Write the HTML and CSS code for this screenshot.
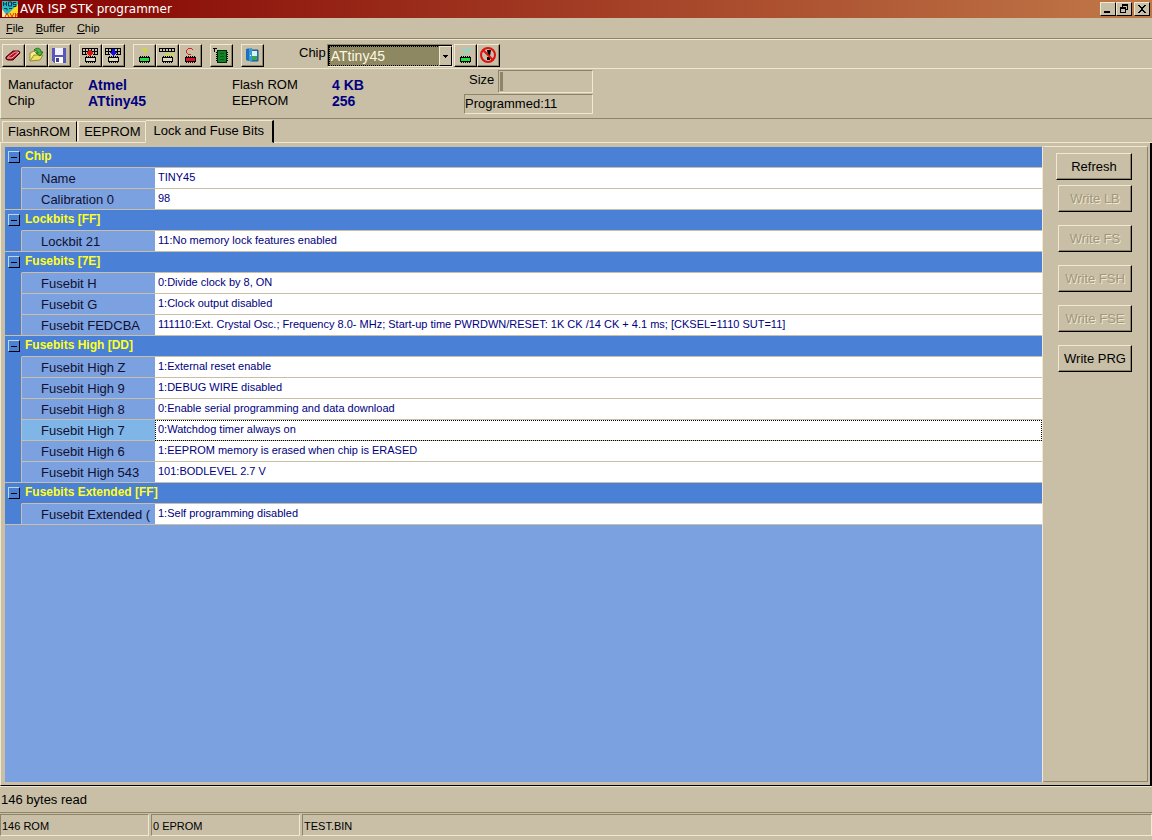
FILE: index.html
```html
<!DOCTYPE html>
<html lang="en">
<head>
    <meta charset="UTF-8">
    <meta name="viewport" content="width=device-width, initial-scale=1.0">
    <title>AVR ISP STK programmer</title>
    <link rel="stylesheet" href="styles.css">
</head>
<body>
<svg class="defs" aria-hidden="true">
    <defs>
        <g id="chip">
            <path d="M5 9h1v7H5zM7 9h1v7H7zM9 9h1v7H9zM11 9h1v7h-1zM13 9h1v7h-1z" fill="#000"/>
            <path d="M4 10h11v5H4z" fill="#000"/>
            <path d="M5 11h9v3H5z" fill="currentColor"/>
        </g>
        <g id="matrix">
            <path d="M1 1.5h16M1 4.5h16M1 7.5h5M12 7.500h5M1.500 1v7M4.500 1v7M7.500 1v4M10.500 1v4M13.500 1v7M16.500 1v7" stroke="#000" fill="none"/>
        </g>
    </defs>
</svg>

<header class="title-bar">
    <svg class="app-icon" viewBox="0 0 16 16">
        <path d="M0 0h16v16H0z" fill="#28b8c0"/>
        <path d="M16 3v13H3z" fill="#ffd820"/>
        <path d="M0 8l6 8H0z" fill="#f8e8a0"/>
        <path d="M1.500 1v4M1.500 3h3M4.500 1v4M6.500 1h3v4h-3zM14 1.500h-3v2h3v2h-3M2 7.500h3v2M7 7.500h3" stroke="#003850" fill="none"/>
        <path d="M3 16l2-4 2 4M8 12l2 4 2-4M13.500 16v-4M13 14h2.500M15.500 12v4" stroke="#e03010" fill="none"/>
    </svg>
    <h1>AVR ISP STK programmer</h1>
    <div class="window-buttons">
        <button type="button" aria-label="Minimize"><svg viewBox="0 0 12 10"><path d="M2 7h6v2H2z"/></svg></button>
        <button type="button" aria-label="Restore"><svg viewBox="0 0 12 10"><path d="M4 0h6v6H8V5h1V2H5v1H4zM2 3h6v6H2zM3 5v3h4V5z" fill-rule="evenodd"/></svg></button>
        <button type="button" class="close" aria-label="Close"><svg viewBox="0 0 12 10"><path d="M2 1h2v1h1v1h2V2h1V1h2v1H9v1H8v1H7v2h1v1h1v1h1v1H8V8H7V7H5v1H4v1H2V8h1V7h1V6h1V4H4V3H3V2H2z"/></svg></button>
    </div>
</header>

<nav class="menu-bar">
    <button type="button"><u>F</u>ile</button>
    <button type="button"><u>B</u>uffer</button>
    <button type="button"><u>C</u>hip</button>
</nav>

<div class="toolbar">
    <div class="group">
        <button type="button" aria-label="Erase buffer"><svg viewBox="0 0 18 16">
            <path d="M2 10l7-6h6l1 2-7 7H4l-2-1z" fill="#b81020" stroke="#400008"/>
            <path d="M4 10l7-5h3" fill="none" stroke="#ffa0a0"/>
            <path d="M3 11h5l7-6" fill="none" stroke="#f8d0d0"/>
        </svg></button>
        <button type="button" aria-label="Open"><svg viewBox="0 0 18 16">
            <path d="M3 14V6l4-2 2 2h4v3" fill="#f8f090" stroke="#90902c"/>
            <path d="M3 14l4-6h9l-3 5z" fill="#f0e060" stroke="#90902c"/>
            <path d="M7 3c3-3 7-2 7 2h2l-3 4-4-3h2c0-2-2-2-4-3z" fill="#50b040" stroke="#207020"/>
        </svg></button>
        <button type="button" aria-label="Save"><svg class="pixel" viewBox="0 0 18 16">
            <path d="M2 1h14v15H4l-2-2z" fill="#5858b8"/>
            <path d="M5 1h8v7H5z" fill="#f0f0ff"/>
            <path d="M5 10h8v6H5z" fill="#fff"/>
            <path d="M6 11h3v4H6z" fill="#404090"/>
        </svg></button>
    </div>
    <div class="group">
        <button type="button" aria-label="Read chip"><svg class="pixel" viewBox="0 0 18 16">
            <use href="#matrix"/>
            <path d="M8 3h2v1h1v1h1v2h-1v1h-1v1H8V8H7V7H6V5h1V4h1z" fill="#e01010"/>
            <use href="#chip" color="#ddd8c0"/>
        </svg></button>
        <button type="button" aria-label="Write chip"><svg class="pixel" viewBox="0 0 18 16">
            <use href="#matrix"/>
            <path d="M8 2h3v3h2v1h-1v1h-1v1h-1v1H9V8H8V7H7V6H6V5h2z" fill="#1010e0"/>
            <use href="#chip" color="#ddd8c0"/>
        </svg></button>
    </div>
    <div class="group">
        <button type="button" aria-label="Blank check"><svg class="pixel" viewBox="0 0 18 16">
            <path d="M7 2h1V1h3v1h1v2h-1v1h-1v1H9V4h1V2H8v2H7zM9 7h1v1H9z" fill="#d0e020"/>
            <use href="#chip" color="#20e040"/>
        </svg></button>
        <button type="button" aria-label="Verify chip"><svg class="pixel" viewBox="0 0 18 16">
            <path d="M1 1.500h16M1 4.500h16M1.500 1v4M4.500 1v4M7.500 1v4M10.500 1v4M13.500 1v4M16.500 1v4" stroke="#000" fill="none"/>
            <path d="M7 7h3V6h3v2H9v1H7zM14 6h2v3h-2z" fill="#c0e040"/>
            <use href="#chip" color="#ddd8c0"/>
        </svg></button>
        <button type="button" aria-label="Erase chip"><svg class="pixel" viewBox="0 0 18 16">
            <path d="M7 1h4v1h1v1h-1V2H7v1H6v3h1v1h3v1H7V7H6V6H5V3h1V2h1z" fill="#e02020"/>
            <use href="#chip" color="#e01020"/>
        </svg></button>
    </div>
    <div class="group">
        <button type="button" aria-label="Chip settings"><svg class="pixel" viewBox="0 0 18 16">
            <path d="M1 1h4v1H3v3H2V2H1zM4 5h12v1H4zM4 7h12v1H4zM4 9h12v1H4zM4 11h12v1H4zM4 13h12v1H4z" fill="#000"/>
            <path d="M5 3h10v13H5z" fill="#002808"/>
            <path d="M6 4h8v11H6z" fill="#148028"/>
            <path d="M8 6h4v1H8zM8 9h4v1H8zM8 12h4v1H8z" fill="#006010"/>
        </svg></button>
    </div>
    <div class="group">
        <button type="button" aria-label="Exit"><svg viewBox="0 0 18 16">
            <path d="M8 3h7v11H8z" fill="#2878c0" stroke="#205888"/>
            <path d="M9 4h5v5H9z" fill="#d8f0f8"/>
            <path d="M9 9h5v4H9z" fill="#30a850"/>
            <path d="M3 2l6-1v14l-6-2z" fill="#3898d8"/>
            <path d="M3 2l3-.5V14l-3-1z" fill="#2070b8"/>
            <path d="M7 8h1v1H7z" fill="#fff"/>
        </svg></button>
    </div>
    <label class="chip-label" for="chipSelect">Chip</label>
    <div class="chip-select">
        <select id="chipSelect">
            <option>ATtiny45</option>
        </select>
        <span class="arrow"><svg viewBox="0 0 5 3"><path d="M0 0h5v1H4v1H3v1H2V2H1V1H0z"/></svg></span>
    </div>
    <div class="group">
        <button type="button" aria-label="Detect chip"><svg class="pixel" viewBox="0 0 18 16">
            <path d="M6 2h3v1H6zM8 3h1v3H8zM10 1h1v5h-1zM12 2h4v1h-2v3h-1V3h-1zM6 7h3v1H6z" fill="#70e0d8"/>
            <use href="#chip" color="#20e040"/>
        </svg></button>
        <button type="button" aria-label="Stop"><svg viewBox="0 0 18 16">
            <path d="M8 3h4l-1 6H9zM8 10h3v3H8z" fill="#000"/>
            <circle cx="9" cy="8" r="7" fill="none" stroke="#e01010" stroke-width="2"/>
            <path d="M4 3l10 10" stroke="#e01010" stroke-width="2"/>
        </svg></button>
    </div>
</div>

<section class="chip-info">
    <dl>
        <dt>Manufactor</dt><dd>Atmel</dd>
        <dt>Chip</dt><dd>ATtiny45</dd>
    </dl>
    <dl class="memory">
        <dt>Flash ROM</dt><dd>4 KB</dd>
        <dt>EEPROM</dt><dd>256</dd>
    </dl>
    <div class="programming">
        <div class="size">
            <span>Size</span>
            <div class="progress"><div class="progress-fill"></div></div>
        </div>
        <div class="programmed">Programmed:11</div>
    </div>
</section>

<div class="tabs" role="tablist">
    <button type="button" role="tab">FlashROM</button>
    <button type="button" role="tab">EEPROM</button>
    <button type="button" role="tab" class="active" aria-selected="true">Lock and Fuse Bits</button>
</div>

<main class="tab-page">
    <div class="grid">
        <table>
            <colgroup>
                <col class="gutter-col">
                <col class="name-col">
                <col>
            </colgroup>
            <tbody>
            <tr class="category"><td><button type="button" aria-label="Collapse Chip"></button></td><th colspan="2">Chip</th></tr>
            <tr><td></td><th>Name</th><td>TINY45</td></tr>
            <tr><td></td><th>Calibration 0</th><td>98</td></tr>
            </tbody>
            <tbody>
            <tr class="category"><td><button type="button" aria-label="Collapse Lockbits"></button></td><th colspan="2">Lockbits [FF]</th></tr>
            <tr><td></td><th>Lockbit 21</th><td>11:No memory lock features enabled</td></tr>
            </tbody>
            <tbody>
            <tr class="category"><td><button type="button" aria-label="Collapse Fusebits"></button></td><th colspan="2">Fusebits [7E]</th></tr>
            <tr><td></td><th>Fusebit H</th><td>0:Divide clock by 8, ON</td></tr>
            <tr><td></td><th>Fusebit G</th><td>1:Clock output disabled</td></tr>
            <tr><td></td><th>Fusebit FEDCBA</th><td>111110:Ext. Crystal Osc.; Frequency 8.0- MHz; Start-up time PWRDWN/RESET: 1K CK /14 CK + 4.1 ms; [CKSEL=1110 SUT=11]</td></tr>
            </tbody>
            <tbody>
            <tr class="category"><td><button type="button" aria-label="Collapse Fusebits High"></button></td><th colspan="2">Fusebits High [DD]</th></tr>
            <tr><td></td><th>Fusebit High Z</th><td>1:External reset enable</td></tr>
            <tr><td></td><th>Fusebit High 9</th><td>1:DEBUG WIRE disabled</td></tr>
            <tr><td></td><th>Fusebit High 8</th><td>0:Enable serial programming and data download</td></tr>
            <tr class="selected"><td></td><th>Fusebit High 7</th><td>0:Watchdog timer always on</td></tr>
            <tr><td></td><th>Fusebit High 6</th><td>1:EEPROM memory is erased when chip is ERASED</td></tr>
            <tr><td></td><th>Fusebit High 543</th><td>101:BODLEVEL 2.7 V</td></tr>
            </tbody>
            <tbody>
            <tr class="category"><td><button type="button" aria-label="Collapse Fusebits Extended"></button></td><th colspan="2">Fusebits Extended [FF]</th></tr>
            <tr><td></td><th>Fusebit Extended (</th><td>1:Self programming disabled</td></tr>
            </tbody>
        </table>
    </div>
    <aside class="actions">
        <button type="button" class="refresh">Refresh</button>
        <button type="button" disabled>Write LB</button>
        <button type="button" disabled>Write FS</button>
        <button type="button" disabled>Write FSH</button>
        <button type="button" disabled>Write FSE</button>
        <button type="button">Write PRG</button>
    </aside>
</main>

<div class="message">146 bytes read</div>

<footer class="status-bar">
    <span>146 ROM</span>
    <span>0 EPROM</span>
    <span>TEST.BIN</span>
</footer>
</body>
</html>
```
FILE: styles.css
```css
:root {
    --face: #c8bfa6;
    --light: #f0e8d0;
    --shadow: #8e8468;
    --blue: #4a80d6;
    --blue-light: #7ba1e0;
    --navy: #000080;
}

* {
    box-sizing: border-box;
}

body {
    display: flex;
    flex-direction: column;
    height: 100vh;
    margin: 0;
    background-color: var(--face);
    color: #000;
    font-family: "Liberation Sans", Arial, sans-serif;
    font-size: 13px;
    line-height: 16px;
}

button {
    padding: 0;
    border: none;
    background: none;
    color: inherit;
    font: inherit;
}

svg {
    display: block;
}

.defs {
    position: absolute;
    width: 0;
    height: 0;
}

.pixel {
    shape-rendering: crispEdges;
}

/* Title bar */
.title-bar {
    display: flex;
    align-items: center;
    flex: none;
    height: 18px;
    padding: 0 2px;
    background: linear-gradient(to right, #840000, #c07848);
    color: #fff;
}

.app-icon {
    width: 16px;
    height: 16px;
}

.title-bar h1 {
    flex: 1;
    margin: 0 2px;
    font: 12px/16px "DejaVu Sans", Verdana, sans-serif;
}

.window-buttons {
    display: flex;
}

.window-buttons button {
    width: 16px;
    height: 14px;
    padding: 1px;
    background-color: var(--face);
    border: 1px solid;
    border-color: var(--light) #000 #000 var(--light);
}

.window-buttons svg {
    width: 12px;
    height: 10px;
    shape-rendering: crispEdges;
}

.window-buttons .close {
    margin-left: 2px;
}

/* Menu */
.menu-bar {
    display: flex;
    gap: 12px;
    flex: none;
    height: 21px;
    padding: 2px 6px;
    border-bottom: 1px solid var(--shadow);
    font-size: 11px;
}

/* Toolbar */
.toolbar {
    display: flex;
    flex: none;
    height: 30px;
    padding: 4px 2px 0;
    border-top: 1px solid var(--light);
    border-bottom: 1px solid var(--light);
}

.group {
    display: flex;
    margin-right: 8px;
}

.group button {
    width: 23px;
    height: 23px;
    padding: 1px 1px 3px;
    border: 1px solid;
    border-color: var(--light) #000 #000 var(--light);
    box-shadow: inset -1px -1px var(--shadow);
}

.group svg {
    width: 18px;
    height: 16px;
}

.chip-label {
    margin-left: 27px;
    padding-top: 1px;
}

.chip-select {
    position: relative;
    width: 126px;
    height: 23px;
    margin: 0 1px;
    padding: 1px;
    border: 1px solid;
    border-color: var(--shadow) var(--light) var(--light) var(--shadow);
    box-shadow: inset 1px 1px #000;
}

.chip-select select {
    display: block;
    appearance: none;
    width: 111px;
    height: 20px;
    padding: 0 1px;
    border: 1px dotted #000;
    border-radius: 0;
    background-color: #8e8862;
    color: #fff8e0;
    font: 14px/18px "Liberation Sans", Arial, sans-serif;
}

.arrow {
    position: absolute;
    top: 1px;
    right: 0;
    width: 13px;
    height: 20px;
    padding: 8px 3px;
    border: 1px solid;
    border-color: var(--light) #000 #000 var(--light);
    pointer-events: none;
}

.arrow svg {
    width: 5px;
    height: 3px;
    shape-rendering: crispEdges;
}

/* Chip info */
.chip-info {
    display: flex;
    flex: none;
    height: 50px;
    padding: 1px 7px 0;
    border-bottom: 1px solid var(--shadow);
    border-left: 1px solid var(--light);
}

.chip-info dl {
    display: grid;
    grid-template-columns: 80px 144px;
    align-content: start;
    margin: 7px 0 0;
}

.chip-info .memory {
    grid-template-columns: 100px 132px;
}

.chip-info dd {
    margin: 0;
    color: var(--navy);
    font-size: 14px;
    font-weight: bold;
}

.programming {
    width: 129px;
}

.size {
    display: flex;
    justify-content: space-between;
    height: 24px;
    padding-left: 5px;
}

.size span {
    padding-top: 2px;
}

.progress {
    width: 95px;
    height: 23px;
    padding: 1px;
    border: 1px solid;
    border-color: var(--shadow) var(--light) var(--light) var(--shadow);
}

.progress-fill {
    width: 3px;
    height: 100%;
    background-color: var(--shadow);
}

.programmed {
    height: 20px;
    padding-top: 1px;
    border: 1px solid;
    border-color: var(--shadow) var(--light) var(--light) var(--shadow);
}

/* Tabs */
.tabs {
    display: flex;
    align-items: flex-end;
    flex: none;
    height: 24px;
    padding-left: 2px;
    border-bottom: 1px solid var(--light);
}

.tabs button {
    height: 21px;
    padding: 1px 6px 0 5px;
    border: 1px solid;
    border-color: var(--light) #000 transparent var(--light);
    white-space: nowrap;
}

.tabs button + button {
    padding: 1px 5px 0;
    border-right-color: var(--light);
    border-left-width: 2px;
}

.tabs button.active {
    height: 23px;
    margin-bottom: -1px;
    padding: 0 8px 2px 7px;
    border-right: 2px solid #000;
    border-bottom-color: var(--face);
    border-left: none;
    background-color: var(--face);
}

/* Tab page */
.tab-page {
    display: flex;
    flex: 1;
    min-height: 0;
    padding: 3px 2px 3px 3px;
    border-right: 2px solid #000;
    border-bottom: 1px solid #000;
    border-left: 1px solid var(--light);
}

.grid {
    flex: 1;
    min-width: 0;
    background-color: var(--blue-light);
    border-top: 1px solid var(--face);
    border-right: 1px solid var(--light);
    border-left: 1px solid var(--face);
}

.grid table {
    width: 100%;
    table-layout: fixed;
    border-collapse: separate;
    border-spacing: 0;
}

.gutter-col {
    width: 16px;
}

.name-col {
    width: 134px;
}

.grid tr {
    height: 21px;
}

.grid td,
.grid th {
    height: 21px;
    padding: 0;
    border-bottom: 1px solid var(--face);
    overflow: hidden;
    text-align: left;
    white-space: nowrap;
}

.grid th {
    padding: 2px 0 0 19px;
    border-left: 1px solid var(--face);
    background-color: var(--blue-light);
    color: #101030;
    font-weight: normal;
}

.grid td {
    padding: 0 3px 2px;
    background-color: #fff;
    color: var(--navy);
    font-size: 11px;
}

.grid td:first-child {
    padding: 0;
    border-bottom-color: var(--blue);
    background-color: var(--blue);
}

.grid .category th {
    padding: 0 0 2px 3px;
    border-left-color: var(--blue);
    background-color: var(--blue);
    color: #ffff20;
    font-size: 12px;
    font-weight: bold;
}

.grid tr:last-child > * {
    border-bottom-color: var(--face);
}

.category button {
    display: block;
    width: 12px;
    height: 12px;
    margin-left: 3px;
    padding: 0 2px;
    border: 1px solid;
    border-color: #b8d8e8 #000 #000 #b8d8e8;
}

.category button::before {
    content: "";
    display: block;
    height: 1px;
    background-color: #000;
}

.grid .selected th {
    background-color: #80b5e8;
}

.grid .selected td:last-child {
    outline: 1px dotted #000;
    outline-offset: -1px;
}

/* Write buttons */
.actions {
    display: flex;
    flex-direction: column;
    align-items: flex-end;
    gap: 13px;
    width: 105px;
    padding: 6px 15px 0 0;
    border: 1px solid;
    border-color: var(--light) var(--shadow) var(--shadow) var(--face);
}

.actions button {
    width: 74px;
    height: 27px;
    border: 1px solid;
    border-color: var(--light) #000 #000 var(--light);
    box-shadow: inset -1px -1px var(--shadow);
    white-space: nowrap;
}

.actions button:disabled {
    color: #a0967c;
    text-shadow: 1px 1px var(--light);
}

.actions .refresh {
    width: 76px;
    margin-bottom: -8px;
}

/* Bottom bars */
.message {
    flex: none;
    height: 27px;
    padding: 5px 1px;
    border-top: 1px solid var(--light);
    border-bottom: 1px solid var(--shadow);
}

.status-bar {
    display: flex;
    gap: 2px;
    flex: none;
    height: 27px;
    padding: 1px 0 4px;
    font-size: 11px;
}

.status-bar span {
    width: 149px;
    padding: 3px 1px;
    border: 1px solid;
    border-color: var(--shadow) var(--light) var(--light) var(--shadow);
}

.status-bar span:last-child {
    flex: 1;
}
```
